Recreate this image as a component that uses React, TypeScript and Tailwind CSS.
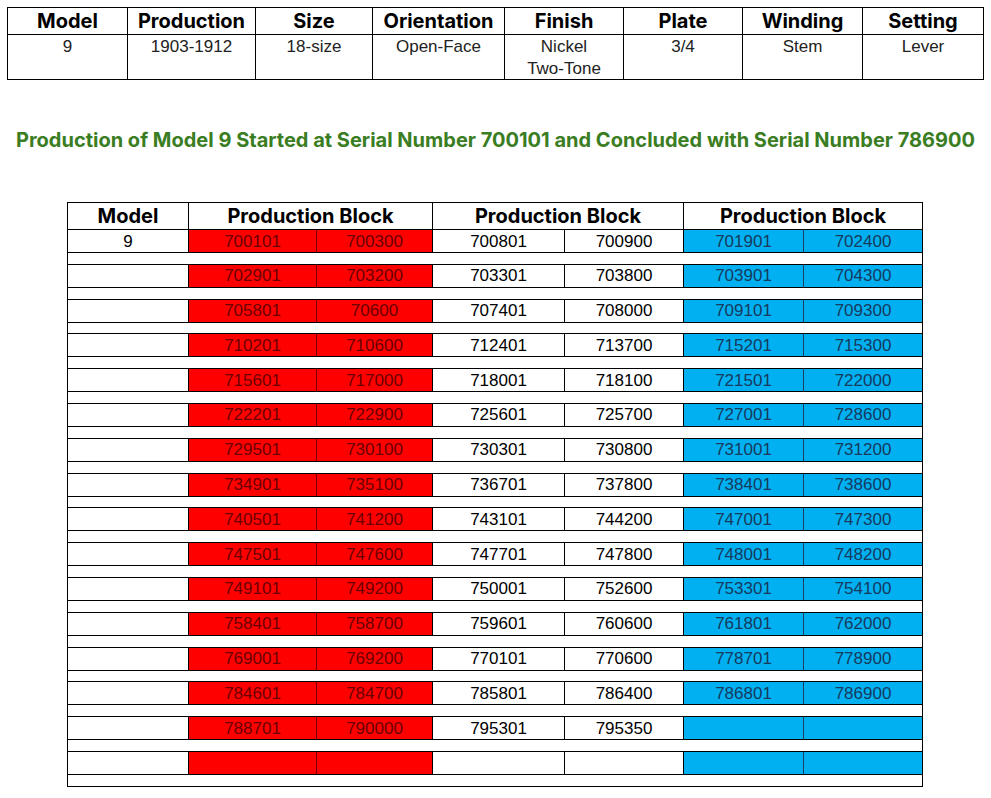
import React from "react";

const topHeads = ["Model", "Production", "Size", "Orientation", "Finish", "Plate", "Winding", "Setting"];
const topWidths = ["w-[120px]", "w-[128px]", "w-[117px]", "w-[132px]", "w-[119px]", "w-[119px]", "w-[120px]", "w-[121px]"];
const topBody: string[][] = [["9"], ["1903-1912"], ["18-size"], ["Open-Face"], ["Nickel", "Two-Tone"], ["3/4"], ["Stem"], ["Lever"]];

// red block, plain block, blue block
const rows: string[][] = [
    ["700101", "700300", "700801", "700900", "701901", "702400"],
    ["702901", "703200", "703301", "703800", "703901", "704300"],
    ["705801", "70600", "707401", "708000", "709101", "709300"],
    ["710201", "710600", "712401", "713700", "715201", "715300"],
    ["715601", "717000", "718001", "718100", "721501", "722000"],
    ["722201", "722900", "725601", "725700", "727001", "728600"],
    ["729501", "730100", "730301", "730800", "731001", "731200"],
    ["734901", "735100", "736701", "737800", "738401", "738600"],
    ["740501", "741200", "743101", "744200", "747001", "747300"],
    ["747501", "747600", "747701", "747800", "748001", "748200"],
    ["749101", "749200", "750001", "752600", "753301", "754100"],
    ["758401", "758700", "759601", "760600", "761801", "762000"],
    ["769001", "769200", "770101", "770600", "778701", "778900"],
    ["784601", "784700", "785801", "786400", "786801", "786900"],
    ["788701", "790000", "795301", "795350", "", ""],
    ["", "", "", "", "", ""],
];

const data = "font-['Liberation_Sans',Arial,sans-serif] text-[17px]";
const bold = "font-['Inter',sans-serif] font-bold text-[20px]";

export default function App() {
    return (
        <div className="min-h-screen bg-white pt-[7px] pl-[7px]">
            {/* Model summary */}
            <div className="flex w-[977px] flex-col border border-black">
                <div className="flex h-[27px] border-b border-black">
                    {topHeads.map((h, i) => (
                        <div
                            key={h}
                            className={`${topWidths[i]} ${i < 7 ? "border-r border-black" : "flex-1"} ${bold} flex items-center justify-center leading-none text-black`}
                        >
                            {h}
                        </div>
                    ))}
                </div>
                <div className="flex h-[44px]">
                    {topBody.map((lines, i) => (
                        <div
                            key={i}
                            className={`${topWidths[i]} ${i < 7 ? "border-r border-black" : "flex-1"} ${data} pt-px text-center leading-[22px] text-[#222]`}
                        >
                            {lines.map((l) => (
                                <div key={l}>{l}</div>
                            ))}
                        </div>
                    ))}
                </div>
            </div>

            {/* Heading */}
            <h1 className="mt-[48px] w-[977px] text-center font-['Inter',sans-serif] text-[20px] font-bold leading-[24px] text-[#3a7d22]">
                Production of Model 9 Started at Serial Number 700101 and Concluded with Serial Number 786900
            </h1>

            {/* Production blocks */}
            <div className="ml-[60px] mt-[50px] w-[856px] border-x border-t border-black">
                <div className="flex h-[27px] border-b border-black text-black">
                    <div className={`w-[121px] border-r border-black ${bold} flex items-center justify-center leading-none`}>Model</div>
                    <div className={`w-[244px] border-r border-black ${bold} flex items-center justify-center leading-none`}>Production Block</div>
                    <div className={`w-[251px] border-r border-black ${bold} flex items-center justify-center leading-none`}>Production Block</div>
                    <div className={`flex-1 ${bold} flex items-center justify-center leading-none`}>Production Block</div>
                </div>
                {rows.map((r, i) => (
                    <div key={i}>
                        <div className={`flex h-[23px] border-b border-black ${data} leading-none`}>
                            <div className="flex w-[121px] items-center justify-center border-r border-black text-black">{i === 0 ? "9" : ""}</div>
                            <div className="flex w-[128px] items-center justify-center border-r border-[#7a0000] bg-[#ff0000] text-[#6b0000]">{r[0]}</div>
                            <div className="flex w-[116px] items-center justify-center border-r border-black bg-[#ff0000] text-[#6b0000]">{r[1]}</div>
                            <div className="flex w-[132px] items-center justify-center border-r border-black text-black">{r[2]}</div>
                            <div className="flex w-[119px] items-center justify-center border-r border-black text-black">{r[3]}</div>
                            <div className="flex w-[120px] items-center justify-center border-r border-[#1c3f5e] bg-[#00b0f0] text-[#173a5e]">{r[4]}</div>
                            <div className="flex flex-1 items-center justify-center bg-[#00b0f0] text-[#173a5e]">{r[5]}</div>
                        </div>
                        <div className="h-[11.8px] border-b border-black" />
                    </div>
                ))}
            </div>
        </div>
    );
}
